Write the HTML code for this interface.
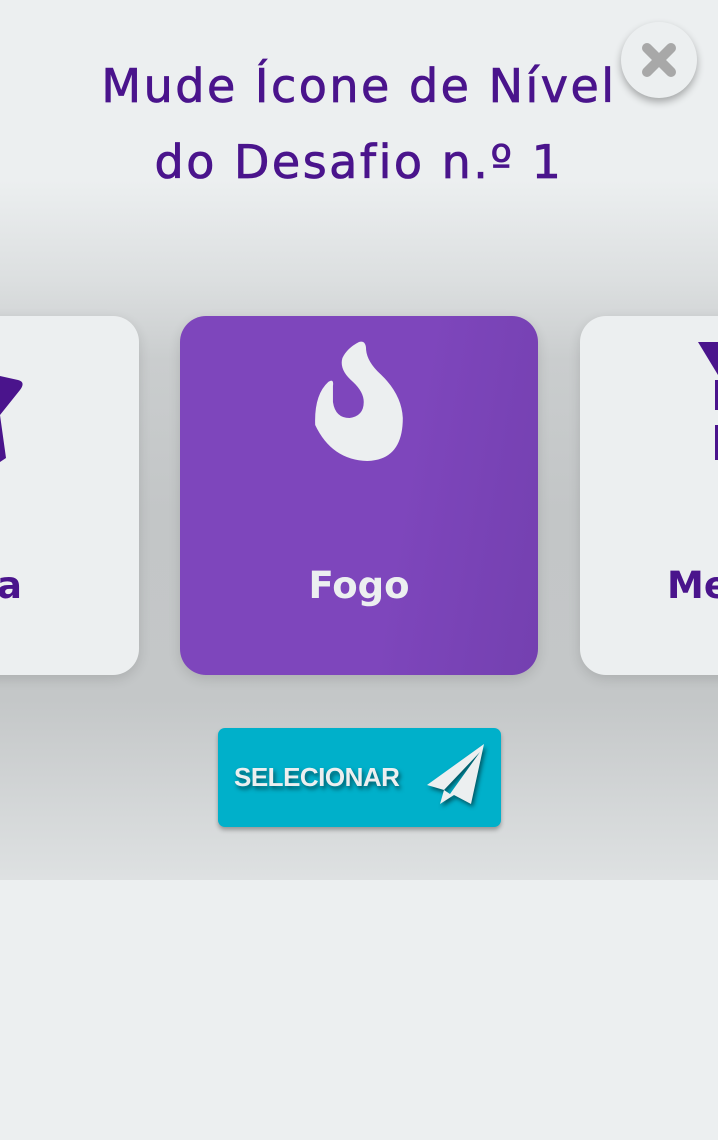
<!DOCTYPE html>
<html><head><meta charset="utf-8"><style>
body{margin:0;width:718px;height:1140px;background:#eceff0;overflow:hidden;position:relative;font-family:"Liberation Sans",sans-serif}
.h{position:absolute;left:0;width:718px;text-align:center;color:#4a148c;font-family:"DejaVu Sans",sans-serif;font-size:46px;letter-spacing:2.5px;line-height:76px;top:48px;-webkit-text-stroke:0.8px #4a148c}
.shade{position:absolute;left:0;top:180px;width:718px;height:700px;background:linear-gradient(180deg,rgba(196,199,200,0) 0,rgba(196,199,200,.4) 100px,rgba(196,199,200,.85) 180px,#c3c6c7 330px,#c4c7c8 520px,#d6d9da 640px,#dee1e2 700px)}
.card{position:absolute;top:316px;width:358px;height:359px;border-radius:26px;background:#eceff0;box-shadow:0 4px 12px rgba(0,0,0,.12)}
.c{left:180px;background:linear-gradient(100deg,#7e46bc 60%,#7440b0)}
.lbl{position:absolute;top:564px;font-family:"DejaVu Sans",sans-serif;font-size:37px;font-weight:bold;color:#4a148c}
.btn{position:absolute;left:218px;top:728px;width:283px;height:99px;border-radius:7px;background:#00b0ca;box-shadow:0 3px 4px rgba(0,0,0,.3)}
.close{position:absolute;left:621px;top:22px;width:76px;height:76px;border-radius:50%;background:#eceff0;box-shadow:0 4px 8px rgba(0,0,0,.3)}
</style></head><body>
<div class="shade"></div>
<div class="h">Mude Ícone de Nível<br>do Desafio n.º 1</div>
<div class="card" style="left:-219px"></div>
<div class="card c"></div>
<div class="card" style="left:580px"></div>
<svg style="position:absolute;left:0;top:370px" width="30" height="95"><path d="M0 6 L18 10 Q26 12 20 20 L0 45 L6 88 L0 92Z" fill="#4a148c"/></svg>
<svg style="position:absolute;left:696px;top:340px" width="22" height="125"><path d="M2 2 L22 2 L22 35 Z" fill="#4a148c"/><rect x="19" y="40" width="3" height="30" fill="#4a148c"/><rect x="19" y="85" width="3" height="35" fill="#4a148c"/></svg>
<div class="lbl" style="left:-3px;">a</div>
<div class="lbl" style="left:667px;">Me</div>
<svg style="position:absolute;left:314px;top:340px" width="90" height="122" viewBox="0 0 76 122" preserveAspectRatio="none"><path d="M38 2 Q44 0 44 10 Q45 22 56 34 Q74 54 75 78 Q75 120 45 121 Q15 120 1 85 Q0 55 12 42 Q17 38 16 46 L16 62 Q18 78 30 78 Q42 76 42 62 Q42 52 33 42 Q21 30 24 18 Q28 8 38 2Z" fill="#eceff0"/></svg>
<div style="position:absolute;left:180px;width:358px;top:564px;text-align:center;font-family:'DejaVu Sans',sans-serif;font-size:37px;font-weight:bold;color:#eceff0">Fogo</div>
<div class="btn"></div>
<div style="position:absolute;left:234px;top:762px;font-size:26px;font-weight:bold;color:#eceff0;letter-spacing:-0.5px;text-shadow:2px 3px 4px rgba(0,0,0,.5)">SELECIONAR</div>
<svg style="position:absolute;left:424px;top:742px;filter:drop-shadow(2px 3px 2px rgba(0,0,0,.5))" width="64" height="64" viewBox="0 0 64 64"><path d="M60 2 L3 43 L20 48 L16 62 L30 53 L47 62 Z M20 48 L56 10 L26 52Z" fill="#eceff0" fill-rule="evenodd"/></svg>
<div class="close"></div>
<svg style="position:absolute;left:639px;top:40px" width="40" height="40" viewBox="0 0 40 40"><path d="M8 8 L32 32 M32 8 L8 32" stroke="#a8a8a8" stroke-width="10" stroke-linecap="round"/></svg>
</body></html>
